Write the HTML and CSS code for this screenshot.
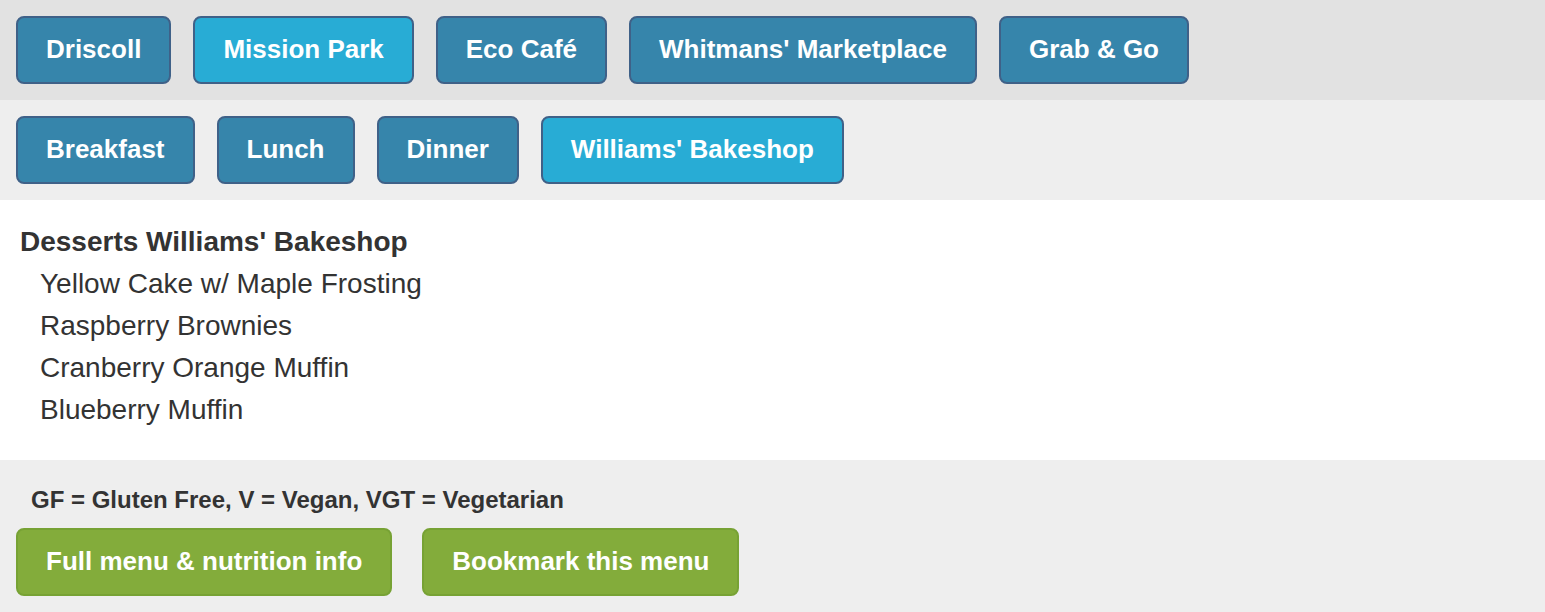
FILE: index.html
```html
<!DOCTYPE html>
<html lang="en">
<head>
    <meta charset="UTF-8">
    <meta name="viewport" content="width=device-width, initial-scale=1.0">
    <title>Williams' Bakeshop - Desserts</title>
    <link rel="stylesheet" href="styles.css">
</head>
<body>
    <nav class="halls">
        <a class="btn" href="#">Driscoll</a>
        <a class="btn active" href="#">Mission Park</a>
        <a class="btn" href="#">Eco Café</a>
        <a class="btn" href="#">Whitmans' Marketplace</a>
        <a class="btn" href="#">Grab &amp; Go</a>
    </nav>

    <nav class="meals">
        <a class="btn" href="#">Breakfast</a>
        <a class="btn" href="#">Lunch</a>
        <a class="btn" href="#">Dinner</a>
        <a class="btn active" href="#">Williams' Bakeshop</a>
    </nav>

    <main class="menu">
        <div class="course">Desserts Williams' Bakeshop</div>
        <ul class="items">
            <li>Yellow Cake w/ Maple Frosting</li>
            <li>Raspberry Brownies</li>
            <li>Cranberry Orange Muffin</li>
            <li>Blueberry Muffin</li>
        </ul>
    </main>

    <footer>
        <div class="legend">GF = Gluten Free, V = Vegan, VGT = Vegetarian</div>
        <div class="actions">
            <a class="btn green" href="#">Full menu &amp; nutrition info</a>
            <a class="btn green" href="#">Bookmark this menu</a>
        </div>
    </footer>
</body>
</html>
```

FILE: styles.css
```css
body {
    font-family: "Liberation Sans", Arial, sans-serif;
    margin: 0;
    padding: 0;
    color: #333;
    background-color: #fff;
}
.halls,
.meals {
    display: flex;
    gap: 22px;
    padding: 16px;
    height: 68px;
}
.halls {
    background-color: #e2e2e2;
}
.meals {
    background-color: #eeeeee;
}
.btn {
    display: block;
    padding: 16px 28px;
    line-height: 31px;
    font-size: 26px;
    font-weight: bold;
    color: #fff;
    text-decoration: none;
    background-color: #3685ab;
    border: 2px solid #3f6188;
    border-radius: 8px;
}
.btn.active {
    background-color: #28acd5;
}
.menu {
    padding: 21px 20px 29px;
    font-size: 28px;
    line-height: 42px;
}
.course {
    font-weight: bold;
}
.items {
    list-style: none;
    margin: 0;
    padding: 0 0 0 20px;
}
footer {
    background-color: #eeeeee;
    padding: 26px 16px 16px;
}
.legend {
    font-size: 24px;
    font-weight: bold;
    line-height: 28px;
    padding-left: 15px;
    margin-bottom: 14px;
}
.actions {
    display: flex;
    gap: 30px;
}
.btn.green {
    background-color: #83ac3b;
    border-color: #77a234;
    padding: 16px 28px 17px;
}
```
